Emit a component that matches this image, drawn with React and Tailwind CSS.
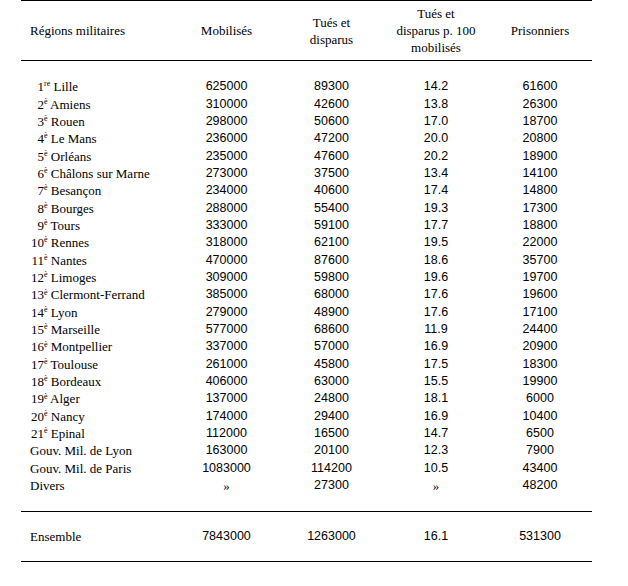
const rows = [
  ["1", "re", "Lille", "625000", "89300", "14.2", "61600"],
  ["2", "è", "Amiens", "310000", "42600", "13.8", "26300"],
  ["3", "è", "Rouen", "298000", "50600", "17.0", "18700"],
  ["4", "è", "Le Mans", "236000", "47200", "20.0", "20800"],
  ["5", "è", "Orléans", "235000", "47600", "20.2", "18900"],
  ["6", "è", "Châlons sur Marne", "273000", "37500", "13.4", "14100"],
  ["7", "è", "Besançon", "234000", "40600", "17.4", "14800"],
  ["8", "è", "Bourges", "288000", "55400", "19.3", "17300"],
  ["9", "è", "Tours", "333000", "59100", "17.7", "18800"],
  ["10", "è", "Rennes", "318000", "62100", "19.5", "22000"],
  ["11", "è", "Nantes", "470000", "87600", "18.6", "35700"],
  ["12", "è", "Limoges", "309000", "59800", "19.6", "19700"],
  ["13", "è", "Clermont-Ferrand", "385000", "68000", "17.6", "19600"],
  ["14", "è", "Lyon", "279000", "48900", "17.6", "17100"],
  ["15", "è", "Marseille", "577000", "68600", "11.9", "24400"],
  ["16", "è", "Montpellier", "337000", "57000", "16.9", "20900"],
  ["17", "è", "Toulouse", "261000", "45800", "17.5", "18300"],
  ["18", "è", "Bordeaux", "406000", "63000", "15.5", "19900"],
  ["19", "è", "Alger", "137000", "24800", "18.1", "6000"],
  ["20", "è", "Nancy", "174000", "29400", "16.9", "10400"],
  ["21", "è", "Epinal", "112000", "16500", "14.7", "6500"],
  [null, null, "Gouv. Mil. de Lyon", "163000", "20100", "12.3", "7900"],
  [null, null, "Gouv. Mil. de Paris", "1083000", "114200", "10.5", "43400"],
  [null, null, "Divers", "»", "27300", "»", "48200"],
];

const grid = "grid grid-cols-[153px_105px_105px_104px_104px]";
const serif = "[font-family:'Liberation_Serif',serif] text-[13px]";
const sans = "[font-family:'Liberation_Sans',Arial,sans-serif] text-[12.5px]";

function Num({ v }) {
  // the » marks are set in the serif face
  return (
    <div className={`text-center ${v === "»" ? serif : sans}`}>{v}</div>
  );
}

export default function App() {
  return (
    <div className="w-[628px] h-[586px] bg-white text-black">
      <div className="ml-[21px] w-[571px] border-t border-black">
        {/* header */}
        <div className={`${grid} h-[60px] border-b border-black ${serif} leading-[17px]`}>
          <div className="flex items-center pl-[9px]">Régions militaires</div>
          <div className="flex items-center justify-center">Mobilisés</div>
          <div className="flex items-center justify-center text-center">
            Tués et
            <br />
            disparus
          </div>
          <div className="flex items-center justify-center text-center">
            Tués et
            <br />
            disparus p. 100
            <br />
            mobilisés
          </div>
          <div className="flex items-center justify-center">Prisonniers</div>
        </div>

        {/* body */}
        <div className="pt-[17px] pb-[16.5px] border-b border-black">
          {rows.map(([n, sup, name, mob, tues, pct, pris]) => (
            <div key={name} className={`${grid} h-[17.35px] items-center leading-[17px]`}>
              <div className={`${serif} pl-[9px] whitespace-nowrap`}>
                {n ? (
                  <>
                    <span className="inline-block w-[14px] text-right">{n}</span>
                    <sup className="text-[8px] top-[-0.6em]">{sup}</sup>{" "}
                    {name}
                  </>
                ) : (
                  name
                )}
              </div>
              <Num v={mob} />
              <Num v={tues} />
              <Num v={pct} />
              <Num v={pris} />
            </div>
          ))}
        </div>

        {/* total */}
        <div className={`${grid} h-[50px] items-center border-b border-black leading-[17px]`}>
          <div className={`${serif} pl-[9px]`}>Ensemble</div>
          <Num v="7843000" />
          <Num v="1263000" />
          <Num v="16.1" />
          <Num v="531300" />
        </div>
      </div>
    </div>
  );
}
